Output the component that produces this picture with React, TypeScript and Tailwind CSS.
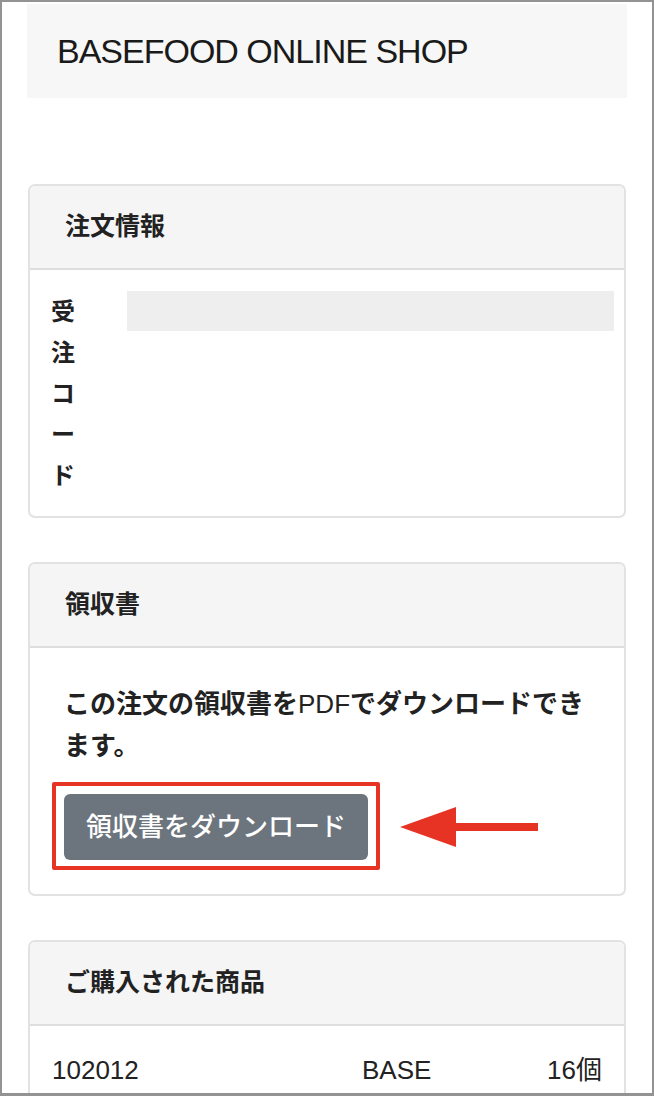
import React from 'react';

const font = { fontFamily: '"Liberation Sans", "Noto Sans CJK JP", sans-serif' };

const Card = ({ title, children, bodyClass }: { title: string; children: React.ReactNode; bodyClass: string }) => (
  <div className="border-2 border-[#e2e2e2] rounded-[7px] overflow-hidden bg-white">
    <div className="bg-[#f5f5f5] border-b-2 border-[#dedede] h-[84px] flex items-center px-[35px]">
      <h2 className="text-[25px] font-bold text-[#222]">{title}</h2>
    </div>
    <div className={bodyClass}>{children}</div>
  </div>
);

export default function App() {
  return (
    <div
      style={font}
      className="w-[654px] h-[1096px] overflow-hidden border-2 border-b-[3px] border-[#939393] bg-white px-[25px] pt-[2px] text-[#222]"
    >
      {/* Shop header */}
      <div className="bg-[#f7f7f7] h-[94px] flex items-center px-[30px]">
        <h1 className="text-[34px] tracking-[-1px] leading-none text-[#1a1a1a]">BASEFOOD ONLINE SHOP</h1>
      </div>

      <div className="mt-[86px] flex flex-col gap-[44px] px-[1px]">
        {/* Order info */}
        <Card title="注文情報" bodyClass="pl-[21px] pr-[10px] pt-[21px] pb-[20px] flex items-start">
          <div className="w-[27px] break-all text-[24px] leading-[41px] font-bold">受注コード</div>
          <div className="ml-[49px] flex-1 h-[40px] bg-[#eeeeee]" />
        </Card>

        {/* Receipt */}
        <Card title="領収書" bodyClass="px-[34px] pt-[35px] pb-[34px]">
          <p className="text-[26px] leading-[42px] font-bold">
            この注文の領収書を<span className="font-normal">PDF</span>でダウンロードできます。
          </p>
          <div className="relative mt-[27px] inline-block">
            <button className="h-[66px] w-[304px] rounded-[6px] bg-[#6c757d] text-white text-[26px] font-medium">
              領収書をダウンロード
            </button>
            <div className="absolute -left-[12px] -right-[12px] -top-[12px] -bottom-[10px] border-4 border-[#e73323] rounded-[2px]" />
            <svg
              className="absolute left-[336px] top-1/2 -translate-y-1/2"
              width="140"
              height="44"
              viewBox="0 0 140 44"
            >
              <polygon points="0,22 56,2 56,42" fill="#e73323" />
              <rect x="54" y="18" width="84" height="8" fill="#e73323" />
            </svg>
          </div>
        </Card>

        {/* Purchased items */}
        <Card title="ご購入された商品" bodyClass="px-[22px] pt-[24px] pb-[20px]">
          <div className="flex items-center text-[26px] leading-[40px]">
            <span className="w-[310px]">102012</span>
            <span>BASE</span>
            <span className="ml-auto">16個</span>
          </div>
        </Card>
      </div>
    </div>
  );
}
